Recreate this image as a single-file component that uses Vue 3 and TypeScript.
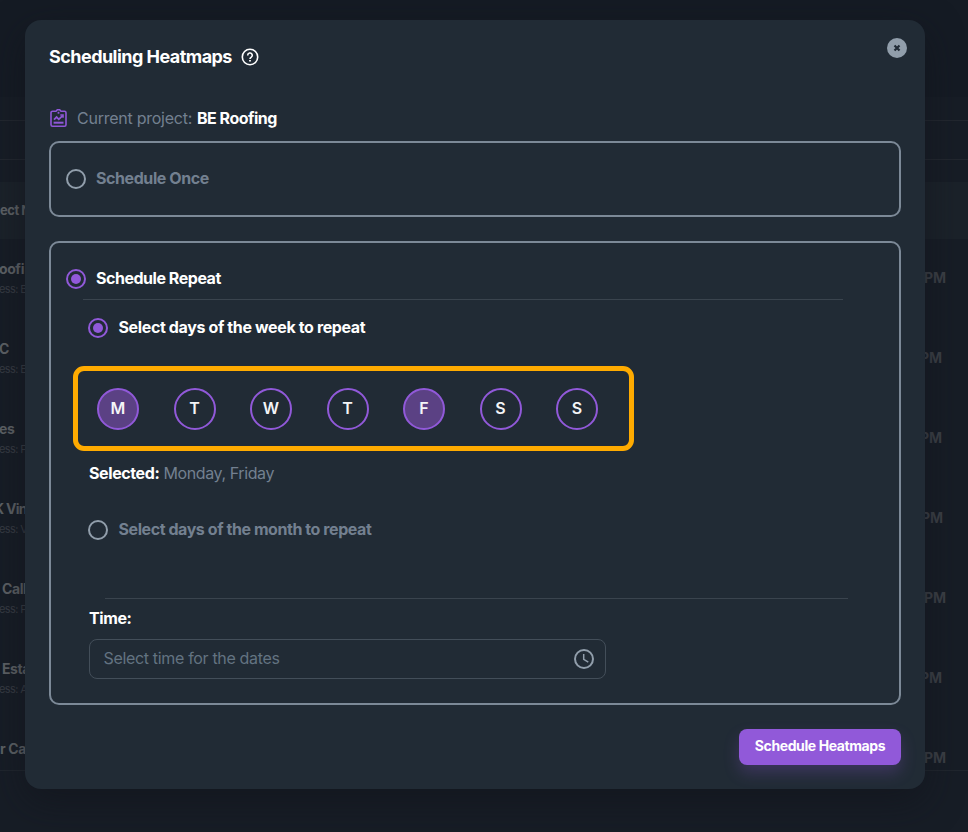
<script setup lang="ts">
import { ref, computed } from 'vue'

interface Row { name: string; sub: string; time: string }
interface Day { short: string; full: string }

const rows: Row[] = [
  { name: 'oofi', sub: 'ess: B', time: 'PM' },
  { name: 'C', sub: 'ess: E', time: 'PM' },
  { name: 'es', sub: 'ess: F', time: 'PM' },
  { name: 'K Vin', sub: 'ess: V', time: 'PM' },
  { name: 'Call', sub: 'ess: P', time: 'PM' },
  { name: 'Esta', sub: 'ess: A', time: 'PM' },
  { name: 'r Ca', sub: '', time: 'PM' },
]

const days: Day[] = [
  { short: 'M', full: 'Monday' },
  { short: 'T', full: 'Tuesday' },
  { short: 'W', full: 'Wednesday' },
  { short: 'T', full: 'Thursday' },
  { short: 'F', full: 'Friday' },
  { short: 'S', full: 'Saturday' },
  { short: 'S', full: 'Sunday' },
]

const mode = ref<'once' | 'repeat'>('repeat')
const repeatBy = ref<'week' | 'month'>('week')
const picked = ref<number[]>([0, 4])
const pickedNames = computed(() => days.filter((_, i) => picked.value.includes(i)).map(d => d.full).join(', '))

function toggle(i: number) {
  picked.value = picked.value.includes(i) ? picked.value.filter(n => n !== i) : [...picked.value, i]
}
</script>

<template>
  <div class="page">
    <div class="backdrop">
      <div class="top"></div>
      <div class="filters"></div>
      <div class="filters second"></div>
      <div class="gap"></div>
      <div class="thead">ect N</div>
      <div v-for="(row, i) in rows" :key="i" class="trow" :class="'row' + i">
        <div class="cell">
          <div class="name">{{ row.name }}</div>
          <div class="sub">{{ row.sub }}</div>
        </div>
        <div class="when">{{ row.time }}</div>
      </div>
    </div>

    <div class="modal">
      <header class="head">
        <h1>Scheduling Heatmaps</h1>
        <svg class="help" width="18" height="18" viewBox="0 0 18 18" fill="none" stroke="#fff">
          <circle cx="9" cy="9" r="7.7" stroke-width="1.6" />
          <path d="M6.7 7.5a2.3 2.3 0 1 1 3.6 1.7C9.4 9.8 9 10 9 10.9" stroke-width="1.6" />
          <path d="M9 12v1.6" stroke-width="1.8" />
        </svg>
        <button class="close" aria-label="Close">
          <svg width="20" height="20" viewBox="0 0 20 20">
            <circle cx="10" cy="10" r="10" fill="#919eab" />
            <path d="M7.5 7.5l5 5M12.5 7.5l-5 5" stroke="#212b36" stroke-width="2.2" />
          </svg>
        </button>
      </header>

      <div class="project">
        <svg width="20" height="20" viewBox="0 0 20 20" fill="none" stroke="#8f57d8" stroke-width="1.6">
          <path d="M7 3.2H3.5A1.5 1.5 0 0 0 2 4.700v12A1.500 1.500 0 0 0 3.500 18.200h12A1.500 1.500 0 0 0 17 16.700v-12A1.500 1.500 0 0 0 15.500 3.200H12l-1.300-1.400H8.300z" />
          <path d="M5 11.600l2.600-2.500 2.200 2.200 3.900-3.700" stroke-width="1.8" />
          <path d="M11.300 7h2.700v2.700" />
          <path d="M4.600 14.700h9.900" stroke-width="2" />
          <path d="M9.500 3.800v1.900" stroke-width="1.8" />
        </svg>
        <span class="lbl">Current project:</span>
        <strong>BE Roofing</strong>
      </div>

      <section class="card once">
        <div class="option off" @click="mode = 'once'">
          <span class="radio" :class="{ on: mode === 'once' }"></span>
          <span class="caption once-text">Schedule Once</span>
        </div>
      </section>

      <section class="card repeat">
        <div class="option main" @click="mode = 'repeat'">
          <span class="radio" :class="{ on: mode === 'repeat' }"></span>
          <span class="caption repeat-text">Schedule Repeat</span>
        </div>
        <hr class="rule" />
        <div class="option week" @click="repeatBy = 'week'">
          <span class="radio" :class="{ on: repeatBy === 'week' }"></span>
          <span class="caption week-text">Select days of the week to repeat</span>
        </div>
        <div class="days">
          <button v-for="(d, i) in days" :key="i" class="day" :class="{ active: picked.includes(i) }" @click="toggle(i)">{{ d.short }}</button>
        </div>
        <div class="selected"><strong>Selected:</strong><span>{{ pickedNames }}</span></div>
        <div class="option month off" @click="repeatBy = 'month'">
          <span class="radio" :class="{ on: repeatBy === 'month' }"></span>
          <span class="caption month-text">Select days of the month to repeat</span>
        </div>
        <hr class="rule lower" />
        <div class="time-label">Time:</div>
        <div class="time">
          <span class="caption">Select time for the dates</span>
          <svg width="20" height="20" viewBox="0 0 20 20" fill="none" stroke="#919eab">
            <circle cx="10" cy="10" r="9" stroke-width="2" />
            <path d="M9.7 5v5.3l4.6 2.9" stroke-width="1.5" />
          </svg>
        </div>
      </section>

      <footer class="foot"><button class="submit"><span>Schedule Heatmaps</span></button></footer>
    </div>
  </div>
</template>

<style>
body { background: #161c24; }
</style>

<style scoped>
* { box-sizing: border-box; }
button { font: inherit; border: 0; padding: 0; margin: 0; cursor: pointer; }
.page {
  position: relative;
  width: 968px;
  height: 832px;
  padding: 20px 0 0 25px;
  overflow: hidden;
  background: #161c24;
  font-family: Inter, "Liberation Sans", sans-serif;
  font-size: 16px;
  color: #fff;
}
.backdrop { position: absolute; inset: 0; background: #171d26; color: #5d6165; }
.top { height: 97px; background: #151b24; }
.filters { height: 24px; border-bottom: 1px solid #22272f; }
.filters.second { height: 39px; }
.gap { height: 22px; }
.thead { height: 57px; background: #1b222a; font-size: 13px; font-weight: 700; line-height: 57px; letter-spacing: -0.5px; }
.trow { display: flex; justify-content: space-between; height: 80px; padding: 20px 22px 0 0; }
.row6 { height: 52px; border-bottom: 1px solid #20262e; }
.name { font-size: 14px; font-weight: 700; line-height: 20px; letter-spacing: -0.4px; white-space: nowrap; }
.row0 .name, .row1 .name, .row2 .name { margin-left: -1px; }
.row3 .name { margin-left: -6px; letter-spacing: -0.7px; }
.row4 .name { margin-left: 2px; }
.row5 .name { margin-left: 2px; }
.sub { margin-left: -1px; font-size: 11px; line-height: 20px; letter-spacing: -0.6px; color: #373c44; }
.when { padding-top: 9px; font-size: 14px; font-weight: 700; line-height: 20px; color: #3c4046; }
.row1 .when, .row2 .when, .row5 .when { margin-right: 4px; }
.row3 .when { margin-right: 3px; }

.modal {
  position: relative;
  width: 900px;
  height: 769px;
  padding: 24px;
  border-radius: 16px;
  background: #212b35;
  box-shadow: 0 12px 36px rgba(16, 18, 25, 0.55);
}
.head { display: flex; align-items: center; height: 26px; }
h1 { margin: 0; width: 192px; font-size: 18px; font-weight: 700; line-height: 26px; letter-spacing: -0.54px; white-space: nowrap; }
.close { display: flex; background: none; margin: -18px -6px 0 auto; }
.project { display: flex; align-items: center; height: 24px; margin: 36px 0 11px; white-space: nowrap; }
.project .lbl { width: 120px; margin-left: 8px; color: #738090; letter-spacing: -0.25px; }
.project strong { letter-spacing: -0.5px; }
strong { font-weight: 700; }
.card { border: 2px solid #7c8997; border-radius: 10px; }
.once { height: 76px; padding: 26px 15px; margin-bottom: 24px; }
.repeat { height: 464px; padding: 26px 15px 0; }
.option { display: flex; align-items: center; gap: 10px; height: 20px; font-weight: 700; white-space: nowrap; }
.option.off { color: #738090; }
.caption { padding-bottom: 2px; }
.once-text { letter-spacing: -0.42px; }
.repeat-text { letter-spacing: -0.47px; }
.week-text { letter-spacing: -0.37px; }
.month-text { letter-spacing: -0.43px; }
.radio { width: 20px; height: 20px; border: 2px solid #919eab; border-radius: 50%; }
.radio.on { display: flex; padding: 3px; border-color: #9159d9; }
.radio.on::before { content: ''; width: 10px; height: 10px; border-radius: 50%; background: #9159d9; }
.rule { width: 760px; height: 1px; margin: 10px 0 18px 17px; border: 0; background: #3a444e; }
.week, .month { padding-left: 22px; gap: 10.5px; }
.days {
  display: flex;
  justify-content: space-between;
  width: 561px;
  height: 85px;
  margin: 28px 0 0 7px;
  padding: 17px 31px 0 19px;
  border: 5px solid #ffab00;
  border-radius: 11px;
}
.day { width: 42px; height: 42px; padding-bottom: 2px; border: 2px solid #9159d9; border-radius: 50%; background: transparent; color: #f4f5f7; font-size: 16px; font-weight: 600; line-height: 36px; text-align: center; }
.day.active { background: #5b4184; }
.selected { display: flex; height: 24px; margin: 10px 0 35px 23px; line-height: 24px; color: #738090; letter-spacing: -0.4px; white-space: nowrap; }
.selected strong { width: 74.5px; color: #fff; }
.rule.lower { width: 743px; margin: 58px 0 8px 39px; }
.time-label { height: 22px; margin-left: 23px; font-weight: 700; line-height: 22px; letter-spacing: -0.4px; }
.time {
  display: flex;
  align-items: center;
  justify-content: space-between;
  width: 517px;
  height: 40px;
  margin: 10px 0 0 23px;
  padding: 0 11px 0 13.5px;
  border: 1px solid #434e59;
  border-radius: 8px;
  color: #637381;
  letter-spacing: -0.33px;
}
.foot { display: flex; justify-content: flex-end; margin-top: 24px; }
.submit { width: 162px; height: 36px; padding-bottom: 2px; border-radius: 8px; background: #9159d9; box-shadow: 0 8px 16px rgba(145, 89, 217, 0.24); color: #fff; font-size: 14px; font-weight: 700; line-height: 34px; letter-spacing: -0.4px; white-space: nowrap; }
</style>
